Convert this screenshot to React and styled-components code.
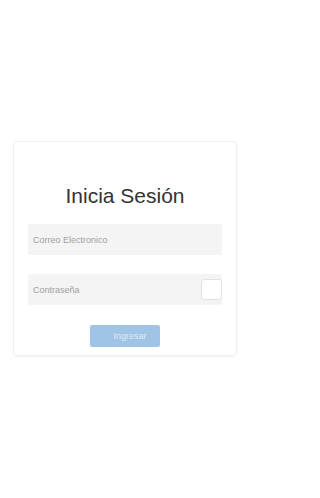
import styled, { createGlobalStyle } from 'styled-components';

const Global = createGlobalStyle`
  html, body {
    margin: 0;
    padding: 0;
    background: #ffffff;
    font-family: "Liberation Sans", Arial, sans-serif;
  }
`

function App() {
  return (
    <Page>
      <Global />
      <Card>
        <Title>Inicia Sesión</Title>
        <Field>
          <Input type="email" placeholder="Correo Electronico" />
        </Field>
        <Field gap="19px">
          <Input type="password" placeholder="Contraseña" />
          <Toggle type="button" aria-label="mostrar contraseña" />
        </Field>
        <Submit disabled>Ingresar</Submit>
      </Card>
    </Page>
  )
}

const Page = styled.div`
  width: 250px;
  height: 498px;
  display: flex;
  align-items: flex-start;
  justify-content: center;
  padding-top: 141px;
  box-sizing: border-box;
`

const Card = styled.div`
  width: 224px;
  height: 215px;
  box-sizing: border-box;
  border: 1px solid #f0f0f0;
  border-radius: 4px;
  box-shadow: 0 1px 2px rgba(0, 0, 0, 0.05);
  padding: 41px 14px 0;
  display: flex;
  flex-direction: column;
  align-items: stretch;
`

const Title = styled.h1`
  margin: 0 0 16px;
  font-size: 21px;
  line-height: 25px;
  font-weight: 400;
  color: #333333;
  text-align: center;
`

const Field = styled.div`
  display: flex;
  align-items: center;
  height: 31px;
  margin-top: ${p => p.gap || '0'};
  background: #f4f4f4;
  border-radius: 2px;
`

const Input = styled.input`
  flex: 1;
  min-width: 0;
  height: 100%;
  border: none;
  outline: none;
  background: transparent;
  padding: 0 5px;
  font-family: "Liberation Sans", Arial, sans-serif;
  font-size: 9px;
  color: #555;
  &::placeholder {
    color: #a0a0a0;
  }
`

const Toggle = styled.button`
  width: 21px;
  height: 21px;
  padding: 0;
  background: #ffffff;
  border: 1px solid #e2e2e2;
  border-radius: 3px;
`

const Submit = styled.button`
  align-self: center;
  margin-top: 20px;
  width: 70px;
  height: 22px;
  border: none;
  border-radius: 2px;
  background: #9fc4e5;
  color: #dfeaf5;
  font-family: "Liberation Sans", Arial, sans-serif;
  font-size: 9px;
  padding: 0 0 0 10px;
`

export default App
